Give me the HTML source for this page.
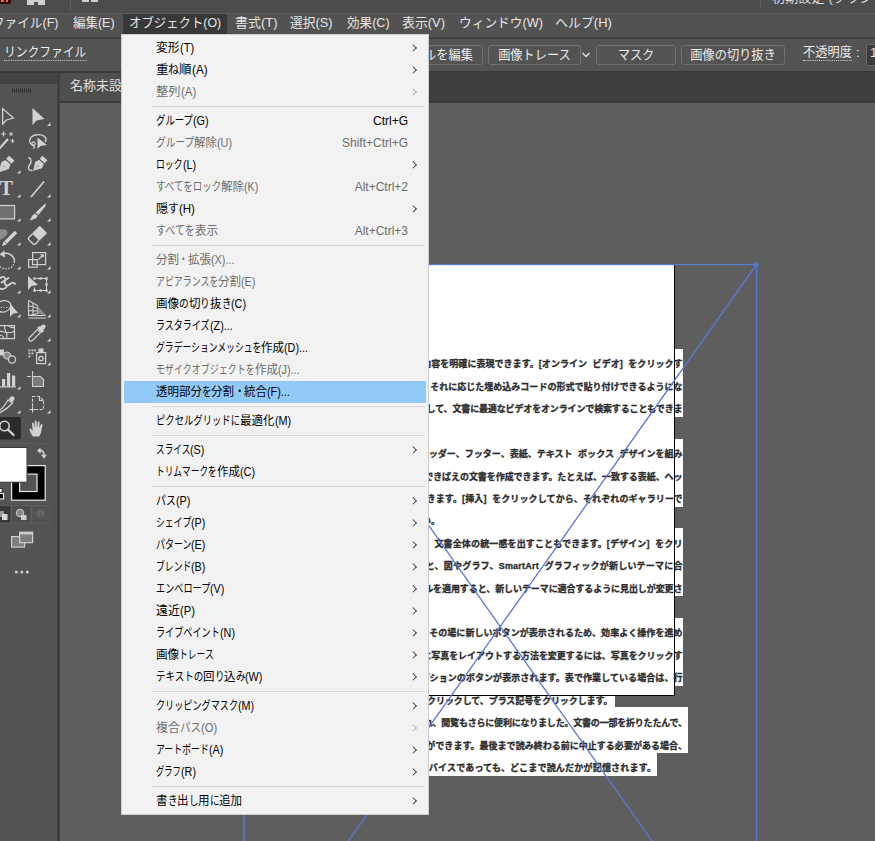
<!DOCTYPE html>
<html lang="ja">
<head>
<meta charset="utf-8">
<title>Illustrator</title>
<style>
html,body{margin:0;padding:0;}
body{width:875px;height:841px;overflow:hidden;position:relative;background:#5e5e5e;font-family:"Liberation Sans","Noto Sans CJK JP",sans-serif;}
.abs{position:absolute;}
#topstrip{left:0;top:0;width:875px;height:13px;background:#4c4c4c;}
#topline{left:0;top:13px;width:875px;height:1px;background:#5a5a5a;z-index:2;}
#menubar{left:0;top:13px;width:875px;height:24px;background:#525252;}
#menubar span{position:absolute;top:0;height:20px;line-height:19px;font-size:13px;color:#e6e6e6;white-space:nowrap;display:inline-block;transform-origin:0 50%;}
#menuline{left:0;top:37px;width:875px;height:2px;background:#3f3f3f;}
#ctrlbar{left:0;top:39px;width:875px;height:32px;background:#535353;}
#ctrlline{left:0;top:71px;width:875px;height:2px;background:#3a3a3a;}
#tabbar{left:60px;top:73px;width:815px;height:28px;background:#3e3e3e;}
#tab{left:60px;top:73px;width:120px;height:28px;background:#4e4e4e;color:#e0e0e0;font-size:13px;line-height:25px;}
#tabline{left:60px;top:101px;width:815px;height:1.5px;background:#3c3c3c;}
#toolpanel{left:0;top:73px;width:57px;height:768px;background:#535353;}
#toolhead{left:0;top:73px;width:57px;height:11px;background:#444;}
#toolgap{left:57px;top:73px;width:3px;height:768px;background:#3f3f3f;}
.btn{position:absolute;top:6px;height:18px;border:1px solid #707070;border-radius:3px;color:#ececec;font-size:13px;line-height:17px;text-align:center;white-space:nowrap;}
.btn span{position:absolute;top:0;display:inline-block;transform:scaleX(0.94);}
.cl{font-size:13px;line-height:18px;color:#ececec;white-space:nowrap;display:inline-block;}

#menu{left:121px;top:34px;width:306px;height:779px;background:#f2f2f2;border:1px solid #cdcdcd;}
#menu .pad{height:2px;}
.mi{position:relative;height:22px;margin:0 2px;color:#000;font-size:12px;line-height:21px;white-space:nowrap;}
.mi.dis{color:#6d6d6d;}
.mi.hl{background:#91c9f7;}
.ml{position:absolute;left:32px;top:1px;}
.r{display:inline-block;position:relative;height:20px;vertical-align:top;}
.r span{position:absolute;left:0;top:0;display:inline-block;transform-origin:0 50%;}
.ms{position:absolute;right:18px;top:1px;}
.ma{position:absolute;right:9.5px;top:7.6px;width:5.4px;height:5.4px;border-right:1.5px solid #3a3a3a;border-top:1.5px solid #3a3a3a;transform:rotate(45deg) scale(0.86);}
.dis .ma{border-color:#aaa;}
.msep{height:7px;position:relative;}
.msep:after{content:"";position:absolute;left:30px;right:3px;top:3px;height:1px;background:#d7d7d7;}

#artboard{left:244px;top:265px;width:430px;height:430px;background:#fff;}
#abr{left:674px;top:265px;width:1.4px;height:431px;background:#000;}
#abb{left:244px;top:694.6px;width:431.4px;height:1.4px;background:#000;}
.wbg{background:#fff;}
.dl{font-size:9px;line-height:16px;height:16px;font-weight:700;color:#2c2c2c;white-space:nowrap;-webkit-text-stroke:0.3px #2c2c2c;}
</style>
</head>
<body>
<div class="abs" id="topstrip"></div>
<div class="abs" style="left:0;top:0;width:11px;height:4px;background:#320a02;border-radius:0 0 2px 0"></div>
<div class="abs" style="left:1px;top:0;width:3px;height:2px;background:#e8701a"></div><div class="abs" style="left:6px;top:0;width:2px;height:2px;background:#e8701a"></div>
<div class="abs" style="left:27px;top:0;width:7px;height:5px;background:#d0d0d0"></div><div class="abs" style="left:38px;top:0;width:7px;height:5px;background:#d0d0d0"></div><div class="abs" style="left:27px;top:0;width:18px;height:1.5px;background:#d0d0d0"></div>
<div class="abs" style="left:70px;top:0;width:1px;height:10px;background:#5f5f5f"></div>
<div class="abs" style="left:82px;top:0;width:7px;height:2px;background:#d0d0d0"></div><div class="abs" style="left:91px;top:0;width:7px;height:2px;background:#d0d0d0"></div>
<div class="abs" style="left:760px;top:0;width:1px;height:8px;background:#5f5f5f"></div>
<div class="abs" style="left:772px;top:-9.5px;font-size:13px;line-height:14px;color:#dedede;white-space:nowrap;letter-spacing:0.2px;">初期設定 (クラシック)</div>
<div class="abs" id="topline"></div>
<div class="abs" id="menubar">
<div class="abs" style="left:123px;top:1px;width:104px;height:20px;background:#383838"></div>
<span style="left:-7.6px;transform:scaleX(0.970)">ファイル(F)</span>
<span style="left:72.5px;transform:scaleX(0.960)">編集(E)</span>
<span style="left:129.0px;transform:scaleX(0.953)">オブジェクト(O)</span>
<span style="left:234.5px;transform:scaleX(0.997)">書式(T)</span>
<span style="left:290.1px;transform:scaleX(0.978)">選択(S)</span>
<span style="left:346.5px;transform:scaleX(0.967)">効果(C)</span>
<span style="left:401.5px;transform:scaleX(0.992)">表示(V)</span>
<span style="left:458.5px;transform:scaleX(0.977)">ウィンドウ(W)</span>
<span style="left:555.2px;transform:scaleX(0.996)">ヘルプ(H)</span>
</div>
<div class="abs" id="menuline"></div>
<div class="abs" id="ctrlbar">
<span class="abs cl" style="left:4px;top:5px;line-height:15.5px;border-bottom:1px dotted #cfcfcf;transform-origin:0 50%;transform:scaleX(0.905)">リンクファイル</span>
<div class="btn" style="left:380px;width:101px;"><span style="transform-origin:100% 50%;right:9px">オリジナルを編集</span></div>
<div class="btn" style="left:488px;width:91px;"><span style="left:0;right:0">画像トレース</span></div>
<svg class="abs" style="left:581px;top:12px" width="10" height="8" viewBox="0 0 10 8"><path d="M1.5,2 L5,5.5 L8.5,2" fill="none" stroke="#e0e0e0" stroke-width="1.5"/></svg>
<div class="btn" style="left:596px;width:78px;"><span style="left:0;right:0">マスク</span></div>
<div class="btn" style="left:681px;width:102px;"><span style="left:0;right:0">画像の切り抜き</span></div>
<span class="abs cl" style="left:802.5px;top:5px;line-height:15.5px;border-bottom:1px dotted #cfcfcf;transform-origin:0 50%;transform:scaleX(0.94)">不透明度</span>
<span class="abs cl" style="left:856px;top:5px;">:</span>
<div class="abs" style="left:866px;top:5px;width:12px;height:20px;background:#3b3b3b;border:1px solid #666;border-radius:2px"></div>
<span class="abs cl" style="left:870px;top:5px;">1</span>
</div>
<div class="abs" id="ctrlline"></div>
<div class="abs" id="tabbar"></div>
<div class="abs" id="tab"><span style="position:absolute;left:10px;white-space:nowrap;">名称未設定</span></div>
<div class="abs" id="tabline"></div>
<div class="abs" id="toolpanel"></div>
<div class="abs" id="toolhead"></div>
<div class="abs" id="toolgap"></div>
<div class="abs" id="artboard"></div>
<div class="abs wbg" style="left:244px;top:349px;width:439px;height:67.5px"></div>
<div class="abs wbg" style="left:244px;top:438.5px;width:439px;height:68px"></div>
<div class="abs wbg" style="left:244px;top:527.5px;width:439px;height:68px"></div>
<div class="abs wbg" style="left:244px;top:618px;width:439px;height:67.5px"></div>
<div class="abs wbg" style="left:244px;top:695px;width:370.5px;height:11.5px"></div>
<div class="abs wbg" style="left:244px;top:706.5px;width:443.5px;height:46px"></div>
<div class="abs wbg" style="left:244px;top:752.5px;width:412.5px;height:23.5px"></div>
<div class="abs" id="abr"></div><div class="abs" id="abb"></div>
<div class="abs dl" style="right:192.46px;top:356.4px;letter-spacing:0.040px;word-spacing:3.00px">ビデオを使うと、伝えたい内容を明確に表現できます。[オンライン ビデオ] をクリックす</div>
<div class="abs dl" style="right:192.48px;top:378.8px;letter-spacing:0.020px">ると、追加したいビデオを、それに応じた埋め込みコードの形式で貼り付けできるようにな</div>
<div class="abs dl" style="right:192.643px;top:401.2px;letter-spacing:-0.143px">ります。キーワードを入力して、文書に最適なビデオをオンラインで検索することもできま</div>
<div class="abs dl" style="right:192.486px;top:446.1px;letter-spacing:0.014px;word-spacing:3.00px">Word に用意されているヘッダー、フッター、表紙、テキスト ボックス デザインを組み</div>
<div class="abs dl" style="right:192.565px;top:468.5px;letter-spacing:-0.065px">合わせると、プロのようなできばえの文書を作成できます。たとえば、一致する表紙、ヘッ</div>
<div class="abs dl" style="right:192.392px;top:490.9px;letter-spacing:0.108px;word-spacing:3.00px">ダー、サイドバーを追加できます。[挿入] をクリックしてから、それぞれのギャラリーで</div>
<div class="abs dl" style="right:435px;top:513.3px">目的の要素を選んでください。</div>
<div class="abs dl" style="right:192.364px;top:535.8px;letter-spacing:0.136px;word-spacing:3.00px">テーマとスタイルを使って、文書全体の統一感を出すこともできます。[デザイン] をクリ</div>
<div class="abs dl" style="right:192.283px;top:558.2px;letter-spacing:0.217px;word-spacing:3.00px">ックし新しいテーマを選ぶと、図やグラフ、SmartArt グラフィックが新しいテーマに合</div>
<div class="abs dl" style="right:192.584px;top:580.6px;letter-spacing:-0.084px">わせて変わります。スタイルを適用すると、新しいテーマに適合するように見出しが変更さ</div>
<div class="abs dl" style="right:192.451px;top:625.4px;letter-spacing:0.049px">Word では、必要に応じてその場に新しいボタンが表示されるため、効率よく操作を進め</div>
<div class="abs dl" style="right:192.526px;top:647.9px;letter-spacing:-0.026px">ることができます。文書内に写真をレイアウトする方法を変更するには、写真をクリックす</div>
<div class="abs dl" style="right:192.423px;top:670.3px;letter-spacing:0.077px">ると、隣にレイアウト オプションのボタンが表示されます。表で作業している場合は、行</div>
<div class="abs dl" style="right:262.588px;top:692.7px;letter-spacing:-0.088px">または列を追加する場所をクリックして、プラス記号をクリックします。</div>
<div class="abs dl" style="right:188.204px;top:715.1px;letter-spacing:-0.204px">新しい閲覧ビューが導入され、閲覧もさらに便利になりました。文書の一部を折りたたんで、</div>
<div class="abs dl" style="right:187.979px;top:737.5px;letter-spacing:0.021px">必要な箇所に集中することができます。最後まで読み終わる前に中止する必要がある場合、</div>
<div class="abs dl" style="right:218.796px;top:760.0px;letter-spacing:0.204px">Word では、たとえ別のデバイスであっても、どこまで読んだかが記憶されます。</div>
<svg class="abs" style="left:0;top:0" width="875" height="841" viewBox="0 0 875 841">
<g fill="none" stroke="#5878d4" stroke-width="1.3">
<rect x="244" y="264.5" width="512.5" height="724"/>
<line x1="244" y1="264.5" x2="756.5" y2="988.5"/>
<line x1="756.5" y1="264.5" x2="244" y2="988.5"/>
</g>
<rect x="754.5" y="262.5" width="4" height="4" fill="#5878d4"/>
</svg>
<!--TOOLS-START-->
<svg class="abs" style="left:0;top:0" width="60" height="841" viewBox="0 0 60 841">
<defs>
<path id="tri" d="M3.5,0 L3.5,3.5 L0,3.5 Z" fill="#d0d0d0"/>
</defs>
<!-- grip -->
<g stroke="#2e2e2e" stroke-width="1">
<path d="M12.5,88.5v4M14.5,88.5v4M16.5,88.5v4M18.5,88.5v4M20.5,88.5v4M22.5,88.5v4M24.5,88.5v4M26.5,88.5v4M28.5,88.5v4M30.5,88.5v4"/>
</g>
<!-- flyout triangles -->
<g>
<use href="#tri" x="47" y="122.5"/>
<use href="#tri" x="17" y="170"/>
<use href="#tri" x="17" y="194"/><use href="#tri" x="47" y="194"/>
<use href="#tri" x="17" y="218"/><use href="#tri" x="47" y="218"/>
<use href="#tri" x="17" y="242"/><use href="#tri" x="47" y="242"/>
<use href="#tri" x="17" y="266"/><use href="#tri" x="47" y="266"/>
<use href="#tri" x="17" y="290"/><use href="#tri" x="47" y="290"/>
<use href="#tri" x="17" y="314"/><use href="#tri" x="47" y="314"/>
<use href="#tri" x="47" y="338"/>
<use href="#tri" x="47" y="362"/>
<use href="#tri" x="17" y="386"/>
<use href="#tri" x="17" y="410"/><use href="#tri" x="47" y="410"/>
</g>
<g fill="none" stroke="#d2d2d2" stroke-width="1.3" stroke-linejoin="miter">
<!-- row1 -->
<path d="M2.6,108.6 L2.6,124 L6.4,120 L13.4,118 Z"/>
<path d="M32.5,108 L32.5,125 L36.6,120.6 L44.5,119 Z" fill="#d2d2d2" stroke="none"/>
<!-- row2: magic wand -->
<path d="M-2,150 L8,139" stroke-width="2.2"/>
<path d="M3.5,131.5v5M1,134h5M11,132v4M9,134h4M12.5,139v4M10.5,141h4" stroke-width="1.1"/>
<!-- lasso -->
<path d="M35,146.5 C30,145 28.5,141 30.5,138 C33,134 42,133.5 45,137 C46.5,139 46,141 45,142" stroke-width="1.4"/>
<circle cx="33.5" cy="143.5" r="1.6" stroke-width="1.2"/>
<path d="M34,145.5 C35,147 34.5,148 33,148.5" stroke-width="1.2"/>
<path d="M37.5,137.5 L37.5,149 L40.5,146 L47,145 Z" fill="#d2d2d2" stroke="none"/>
<!-- row3: pen -->
<g transform="translate(6,164.5) rotate(42)" fill="#d2d2d2" stroke="none">
<path d="M0,10.5 L-5,1.5 L-3.4,-3 L3.4,-3 L5,1.5 Z"/>
<rect x="-3.6" y="-8.5" width="7.2" height="4.2"/>
<path d="M0,9 L0,3.5" stroke="#b4b4b4" stroke-width="0.8"/>
<circle cx="0" cy="2.6" r="0.9" fill="#9a9a9a"/>
</g>
<g transform="translate(39.5,164) rotate(42)" fill="#d2d2d2" stroke="none">
<path d="M0,9.5 L-4.6,1.5 L-3.2,-3 L3.2,-3 L4.6,1.5 Z"/>
<rect x="-3.4" y="-8" width="6.8" height="4"/>
<path d="M0,8 L0,3.5" stroke="#b4b4b4" stroke-width="0.8"/>
<circle cx="0" cy="2.6" r="0.9" fill="#9a9a9a"/>
</g>
<path d="M28.5,157.5 C32,159 31.5,162 29.5,165 C27.5,168 28,171 32.5,170.5" stroke-width="1.4"/>
<!-- row4: T and line -->
<path d="M31,197 L44,181.5" stroke-width="1.7"/>
<!-- row5: rect and brush -->
<rect x="-3" y="205.5" width="17.6" height="13.4" fill="#707070" stroke-width="1.2"/>
<path d="M45.3,203.5 C46,204 46,205 45.5,206 L38.5,215 L35.5,212.5 Z" fill="#d2d2d2" stroke="none"/>
<path d="M35,213.5 L37.7,215.8 C37,218 35,219.5 29.5,220.5 C31.5,218.5 31.5,215 35,213.5 Z" fill="#d2d2d2" stroke="none"/>
<!-- row6: shaper + eraser -->
<path d="M-2,231 C1,228.5 5,228.5 7,231 C8.5,233.5 6,237 2,239 C0,240 -2,239 -3,238 Z" fill="#8d8d8d" stroke="none"/>
<path d="M16,232 L5.5,242.5" stroke-width="3.6"/><path d="M3.6,241.2 L6.8,244.4 L2,246 Z" fill="#d2d2d2" stroke="none"/>
<g transform="translate(37.6,235.2) rotate(-45)"><rect x="-2.2" y="-5.2" width="10.4" height="10.4" rx="0.8" fill="#d2d2d2" stroke="none"/><rect x="-9.4" y="-4.6" width="7.4" height="9.2" rx="1.6" stroke-width="1.3"/></g>
<!-- row7: rotate + scale -->
<path d="M2,254 C8,251.5 14.5,255.5 14.5,261.5" stroke-width="1.5"/>
<path d="M14.5,261.5 C14,267 8,270.5 2,268 C-1,266.5 -2,264 -2.5,262" stroke-width="1.4" stroke-dasharray="1.3 1.6"/>
<path d="M4.5,250.5 L-0.5,254.5 L5,257.5 Z" fill="#d2d2d2" stroke="none"/>
<rect x="32.6" y="252.6" width="13" height="12" stroke-width="1.2"/>
<rect x="28.6" y="259.6" width="8.6" height="7.6" stroke-width="1.2"/>
<path d="M38.5,259.5 L43,255" stroke-width="1.2"/>
<path d="M40,254.3 L43.8,254.3 L43.8,258 Z" fill="#d2d2d2" stroke="none"/>
<!-- row8: warp + free transform -->
<path d="M-1,279 C3,275 6,277 5,281 C4,285 7,287 10,284 C12,282 14,282 15.5,284.5 M-1,288 C2,290 5,289 7,286.5 M1,283 L9,277.5" stroke-width="1.8"/>
<path d="M28,276 L28,290 L31.5,286 L38,285 Z" fill="#d2d2d2" stroke="none"/>
<path d="M36,278.5 L46.5,278.5 L46.5,290.5 L34.5,290.5 L34.5,287.5" stroke-width="1"/>
<g fill="#d2d2d2" stroke="none"><rect x="33.3" y="277.3" width="2.4" height="2.4"/><rect x="45.3" y="277.3" width="2.4" height="2.4"/><rect x="45.3" y="289.3" width="2.4" height="2.4"/><rect x="33.3" y="289.3" width="2.4" height="2.4"/><rect x="39.3" y="277.3" width="2.4" height="2.4"/><rect x="39.3" y="289.3" width="2.4" height="2.4"/><rect x="45.3" y="283.3" width="2.4" height="2.4"/></g>
<!-- row9: shape builder + perspective grid -->
<path d="M-2,303 C2,299.5 8,300 10,303 C12,306 10,310 6,311.5 C3,312.5 0,312 -2,311" stroke-width="1.3"/>
<path d="M-2,307.5 L9,307.5" stroke-width="1.2" stroke-dasharray="1.2 1.5"/>
<path d="M10,303.5 L10,317 L13.2,313.6 L18,313 Z" fill="#d2d2d2" stroke="none"/>
<path d="M28.5,300.5 L28.5,315.5 L46,315.5 M28.5,300.5 L37.5,305.5 L37.5,313.5 L28.5,315.5 M28.5,305.5 L37.5,308.3 M28.5,310.5 L37.5,311 M33,303 L33,314.5 M28.5,318 L46,318" stroke-width="1.1"/>
<path d="M37.5,305.5 L46,315.5 L37.5,313.5 Z" fill="#8a8a8a" stroke="none"/>
<!-- row10: mesh + eyedropper -->
<rect x="-3" y="325.6" width="17.5" height="13" stroke-width="1.2"/>
<path d="M-3,332 C2,329 8,336 14.5,331 M5,325.6 C3,330 9,334 6.5,338.6 M-3,336 C1,334 3,336 4,338.6 M14.5,327.5 C11,328 9.5,327 9,325.6" stroke-width="1.1"/>
<path d="M29.5,340.5 C28.5,339.5 29,338 30,337 L37.5,329.5 L40.5,332.5 L33,340 C32,341 30.5,341.5 29.5,340.5 Z" stroke-width="1.2"/>
<path d="M37,328 L39,326 L40,327 C41,325 43.5,323.5 45,325 C46.5,326.5 45,329 43,330 L44,331 L42,333 Z" fill="#d2d2d2" stroke="none"/>
<!-- row11: blend + symbol sprayer -->
<rect x="-2" y="349.5" width="6" height="6" fill="#d2d2d2" stroke="none"/>
<circle cx="7" cy="355.5" r="3.6" fill="#8d8d8d" stroke="#d2d2d2" stroke-width="1"/>
<circle cx="12" cy="359.5" r="3.6" fill="#535353" stroke="#d2d2d2" stroke-width="1.3"/>
<rect x="36.6" y="352.6" width="9" height="11" stroke-width="1.2"/>
<rect x="38.5" y="348.5" width="5" height="3.5" fill="#d2d2d2" stroke="none"/>
<circle cx="41" cy="358.5" r="2.2" stroke-width="1.3"/>
<g fill="#d2d2d2" stroke="none"><rect x="28.5" y="349.5" width="1.8" height="1.8"/><rect x="31.5" y="349.5" width="1.8" height="1.8"/><rect x="34.3" y="349.5" width="1.8" height="1.8"/><rect x="28.5" y="352.5" width="1.8" height="1.8"/><rect x="31.5" y="352.5" width="1.8" height="1.8"/><rect x="28.5" y="355.5" width="1.8" height="1.8"/></g>
<!-- row12: graph + artboard -->
<g fill="#d2d2d2" stroke="none"><rect x="2" y="379" width="3.2" height="7.5"/><rect x="7" y="373" width="3.2" height="13.5"/><rect x="12" y="375.5" width="3.2" height="11"/><rect x="-2" y="386.3" width="18" height="1.2"/></g>
<path d="M32.5,371 L32.5,377 M27,376.5 L31,376.5" stroke-width="1.1"/>
<path d="M32.5,376.5 L40.5,376.5 L43.5,379.5 L43.5,386.5 L32.5,386.5 Z" fill="#7a7a7a" stroke-width="1.1"/>
<!-- row13: slice + dashed page -->
<path d="M-1,411 C2,409 5,405 8,400 L12.5,403 C9,407 4,410.5 0.5,412.5 Z" stroke-width="1.2"/>
<path d="M8.5,399.5 L11,396.5 C12.5,395.5 15,397 14.5,399 L12.5,402.5 Z" fill="#d2d2d2" stroke="none"/>
<path d="M32.5,396.5 L39.5,396.5 L43.5,400.5 L43.5,409.5 L32.5,409.5 Z" stroke-width="1.1" stroke-dasharray="3 1.5"/>
<path d="M39.5,396.5 L39.5,400.5 L43.5,400.5" stroke-width="1.1"/>
<path d="M32.5,406.5 L32.5,412.5 M29.5,409.5 L35.5,409.5" stroke-width="1.1"/>
<!-- row14: zoom + hand -->
<rect x="-4" y="417" width="25" height="22.5" rx="2.5" fill="#2b2b2b" stroke="none"/>
<circle cx="4.5" cy="426" r="4.7" stroke-width="1.6"/>
<path d="M8,429.5 L13.5,435" stroke-width="2.4" stroke-linecap="round"/>
<path d="M33,436.5 C31,434 30,431.5 29.5,429.5 C29.3,428.3 30.5,428 31.2,429 L32.7,431 L32,423.5 C32,422.3 33.6,422.3 33.8,423.5 L34.6,428 L34.8,421.5 C34.9,420.3 36.5,420.3 36.6,421.5 L36.9,428 L37.9,422.3 C38.1,421.2 39.6,421.4 39.6,422.6 L39.3,428.5 L40.9,424.6 C41.4,423.6 42.7,424 42.5,425.2 L41.2,431.5 C40.8,433.5 40,435.3 39,436.5 Z" fill="#d2d2d2" stroke="none"/>
</g>
<text x="-0.5" y="195" font-family="Liberation Serif, serif" font-weight="bold" font-size="20" fill="#d2d2d2" textLength="13.5" lengthAdjust="spacingAndGlyphs">T</text>
<!-- separator -->
<rect x="0" y="443" width="50" height="1" fill="#5c5c5c"/>
<!-- fill / stroke -->
<rect x="11.6" y="465.6" width="33.6" height="34.6" fill="#000" stroke="#e8e8e8" stroke-width="1.2"/>
<rect x="19.6" y="474.1" width="17.4" height="17.4" fill="#535353" stroke="#e8e8e8" stroke-width="1.2"/>
<rect x="-2" y="447.5" width="29" height="34.7" fill="#fff" stroke="#3a3a3a" stroke-width="1"/>
<!-- swap -->
<path d="M39,450.5 C42,450 44,452 44,455" fill="none" stroke="#d2d2d2" stroke-width="1.6"/>
<path d="M40.5,447.5 L37,450.8 L40.8,453.8 Z" fill="#d2d2d2"/>
<path d="M41,454.8 L47,454.8 L44,458.8 Z" fill="#d2d2d2"/>
<!-- default mini -->
<rect x="-1.5" y="493.5" width="5" height="5.5" fill="#000" stroke="#e0e0e0" stroke-width="1.2"/>
<rect x="-2" y="488.5" width="4" height="4" fill="#fff" stroke="#222" stroke-width="0.8"/>
<!-- colour mode buttons -->
<rect x="-2" y="505.5" width="13" height="17.5" fill="#383838" stroke="#5e5e5e" stroke-width="1"/>
<rect x="11.5" y="505.5" width="19.5" height="17.5" fill="#4e4e4e" stroke="#5e5e5e" stroke-width="1"/>
<rect x="31.5" y="505.5" width="18.5" height="17.5" fill="#535353" stroke="#5e5e5e" stroke-width="1"/>
<rect x="-1" y="511" width="5" height="6" fill="#9a9a9a"/><rect x="2" y="514" width="5.5" height="6" fill="#d8d8d8"/>
<circle cx="20" cy="513" r="3.8" fill="#8a8a8a" stroke="#c8c8c8" stroke-width="1"/><rect x="21" y="515" width="5.5" height="5" fill="#cfcfcf"/>
<circle cx="40.5" cy="513.5" r="4" fill="#636363"/><path d="M40.5,513.5 L40.5,517.5" stroke="#535353" stroke-width="1"/>
<!-- draw mode -->
<rect x="11.6" y="536.6" width="13" height="10.5" fill="#7d7d7d" stroke="#cfcfcf" stroke-width="1.2"/>
<rect x="19.6" y="532.2" width="13" height="10.5" fill="#7d7d7d" stroke="#cfcfcf" stroke-width="1.2"/>
<rect x="19.6" y="532.2" width="13" height="2.2" fill="#cfcfcf"/>
<!-- dots -->
<circle cx="16.3" cy="572" r="1.5" fill="#cfcfcf"/><circle cx="21.8" cy="572" r="1.5" fill="#cfcfcf"/><circle cx="27.3" cy="572" r="1.5" fill="#cfcfcf"/>
</svg>
<!--TOOLS-END-->
<div class="abs" id="menu"><div class="pad"></div>
<div class="mi"><span class="ml"><span class="r" style="width:23.65px"><span style="transform:scaleX(0.985)">変形</span></span><span class="r" style="width:14.15px"><span style="transform:scaleX(0.923)">(T)</span></span></span><span class="ma"></span></div>
<div class="mi"><span class="ml"><span class="r" style="width:12.49px"><span style="transform:scaleX(1.039)">重</span></span><span class="r" style="width:10.93px"><span style="transform:scaleX(0.910)">ね</span></span><span class="r" style="width:12.49px"><span style="transform:scaleX(1.039)">順</span></span><span class="r" style="width:15.59px"><span style="transform:scaleX(0.974)">(A)</span></span></span><span class="ma"></span></div>
<div class="mi dis"><span class="ml"><span class="r" style="width:24.50px"><span style="transform:scaleX(1.020)">整列</span></span><span class="r" style="width:15.30px"><span style="transform:scaleX(0.956)">(A)</span></span></span><span class="ma"></span></div>
<div class="msep"></div>
<div class="mi"><span class="ml"><span class="r" style="width:37.00px"><span style="transform:scaleX(0.783)">グループ</span></span><span class="r" style="width:15.60px"><span style="transform:scaleX(0.900)">(G)</span></span></span><span class="ms">Ctrl+G</span></div>
<div class="mi dis"><span class="ml"><span class="r" style="width:38.34px"><span style="transform:scaleX(0.811)">グループ</span></span><span class="r" style="width:23.05px"><span style="transform:scaleX(0.960)">解除</span></span><span class="r" style="width:15.00px"><span style="transform:scaleX(0.900)">(U)</span></span></span><span class="ms">Shift+Ctrl+G</span></div>
<div class="mi"><span class="ml"><span class="r" style="width:26.60px"><span style="transform:scaleX(0.738)">ロック</span></span><span class="r" style="width:13.20px"><span style="transform:scaleX(0.900)">(L)</span></span></span><span class="ma"></span></div>
<div class="mi dis"><span class="ml"><span class="r" style="width:65.34px"><span style="transform:scaleX(0.793)">すべてをロック</span></span><span class="r" style="width:23.05px"><span style="transform:scaleX(0.960)">解除</span></span><span class="r" style="width:14.40px"><span style="transform:scaleX(0.900)">(K)</span></span></span><span class="ms">Alt+Ctrl+2</span></div>
<div class="mi"><span class="ml"><span class="r" style="width:12.22px"><span style="transform:scaleX(1.017)">隠</span></span><span class="r" style="width:10.69px"><span style="transform:scaleX(0.890)">す</span></span><span class="r" style="width:15.89px"><span style="transform:scaleX(0.953)">(H)</span></span></span><span class="ma"></span></div>
<div class="mi dis"><span class="ml"><span class="r" style="width:38.74px"><span style="transform:scaleX(0.834)">すべてを</span></span><span class="r" style="width:23.05px"><span style="transform:scaleX(0.960)">表示</span></span></span><span class="ms">Alt+Ctrl+3</span></div>
<div class="msep"></div>
<div class="mi dis"><span class="ml"><span class="r" style="width:23.05px"><span style="transform:scaleX(0.960)">分割</span></span><span class="r" style="width:8.69px"><span style="transform:scaleX(0.723)">・</span></span><span class="r" style="width:23.05px"><span style="transform:scaleX(0.960)">拡張</span></span><span class="r" style="width:23.40px"><span style="transform:scaleX(0.900)">(X)...</span></span></span></div>
<div class="mi dis"><span class="ml"><span class="r" style="width:62.34px"><span style="transform:scaleX(0.744)">アピアランスを</span></span><span class="r" style="width:23.05px"><span style="transform:scaleX(0.960)">分割</span></span><span class="r" style="width:14.40px"><span style="transform:scaleX(0.900)">(E)</span></span></span></div>
<div class="mi"><span class="ml"><span class="r" style="width:23.05px"><span style="transform:scaleX(0.960)">画像</span></span><span class="r" style="width:9.72px"><span style="transform:scaleX(0.809)">の</span></span><span class="r" style="width:11.54px"><span style="transform:scaleX(0.960)">切</span></span><span class="r" style="width:9.72px"><span style="transform:scaleX(0.809)">り</span></span><span class="r" style="width:11.54px"><span style="transform:scaleX(0.960)">抜</span></span><span class="r" style="width:9.72px"><span style="transform:scaleX(0.809)">き</span></span><span class="r" style="width:15.00px"><span style="transform:scaleX(0.900)">(C)</span></span></span></div>
<div class="mi"><span class="ml"><span class="r" style="width:53.60px"><span style="transform:scaleX(0.751)">ラスタライズ</span></span><span class="r" style="width:22.80px"><span style="transform:scaleX(0.900)">(Z)...</span></span></span></div>
<div class="mi"><span class="ml"><span class="r" style="width:105.34px"><span style="transform:scaleX(0.735)">グラデーションメッシュを</span></span><span class="r" style="width:23.05px"><span style="transform:scaleX(0.960)">作成</span></span><span class="r" style="width:24.00px"><span style="transform:scaleX(0.900)">(D)...</span></span></span></div>
<div class="mi dis"><span class="ml"><span class="r" style="width:98.65px"><span style="transform:scaleX(0.749)">モザイクオブジェクトを</span></span><span class="r" style="width:23.05px"><span style="transform:scaleX(0.960)">作成</span></span><span class="r" style="width:21.60px"><span style="transform:scaleX(0.900)">(J)...</span></span></span></div>
<div class="mi hl"><span class="ml"><span class="r" style="width:46.09px"><span style="transform:scaleX(0.960)">透明部分</span></span><span class="r" style="width:9.40px"><span style="transform:scaleX(0.782)">を</span></span><span class="r" style="width:23.05px"><span style="transform:scaleX(0.960)">分割</span></span><span class="r" style="width:9.40px"><span style="transform:scaleX(0.782)">・</span></span><span class="r" style="width:23.05px"><span style="transform:scaleX(0.960)">統合</span></span><span class="r" style="width:22.80px"><span style="transform:scaleX(0.900)">(F)...</span></span></span></div>
<div class="msep"></div>
<div class="mi"><span class="ml"><span class="r" style="width:84.03px"><span style="transform:scaleX(0.778)">ピクセルグリッドに</span></span><span class="r" style="width:34.57px"><span style="transform:scaleX(0.960)">最適化</span></span><span class="r" style="width:16.20px"><span style="transform:scaleX(0.900)">(M)</span></span></span></div>
<div class="msep"></div>
<div class="mi"><span class="ml"><span class="r" style="width:34.40px"><span style="transform:scaleX(0.722)">スライス</span></span><span class="r" style="width:14.40px"><span style="transform:scaleX(0.900)">(S)</span></span></span><span class="ma"></span></div>
<div class="mi"><span class="ml"><span class="r" style="width:60.74px"><span style="transform:scaleX(0.723)">トリムマークを</span></span><span class="r" style="width:23.05px"><span style="transform:scaleX(0.960)">作成</span></span><span class="r" style="width:15.00px"><span style="transform:scaleX(0.900)">(C)</span></span></span></div>
<div class="msep"></div>
<div class="mi"><span class="ml"><span class="r" style="width:19.90px"><span style="transform:scaleX(0.829)">パス</span></span><span class="r" style="width:14.40px"><span style="transform:scaleX(0.900)">(P)</span></span></span><span class="ma"></span></div>
<div class="mi"><span class="ml"><span class="r" style="width:35.40px"><span style="transform:scaleX(0.737)">シェイプ</span></span><span class="r" style="width:14.40px"><span style="transform:scaleX(0.900)">(P)</span></span></span><span class="ma"></span></div>
<div class="mi"><span class="ml"><span class="r" style="width:35.40px"><span style="transform:scaleX(0.747)">パターン</span></span><span class="r" style="width:14.40px"><span style="transform:scaleX(0.900)">(E)</span></span></span><span class="ma"></span></div>
<div class="mi"><span class="ml"><span class="r" style="width:35.40px"><span style="transform:scaleX(0.737)">ブレンド</span></span><span class="r" style="width:14.40px"><span style="transform:scaleX(0.900)">(B)</span></span></span><span class="ma"></span></div>
<div class="mi"><span class="ml"><span class="r" style="width:54.40px"><span style="transform:scaleX(0.763)">エンベロープ</span></span><span class="r" style="width:14.40px"><span style="transform:scaleX(0.900)">(V)</span></span></span><span class="ma"></span></div>
<div class="mi"><span class="ml"><span class="r" style="width:23.88px"><span style="transform:scaleX(0.994)">遠近</span></span><span class="r" style="width:14.92px"><span style="transform:scaleX(0.932)">(P)</span></span></span><span class="ma"></span></div>
<div class="mi"><span class="ml"><span class="r" style="width:63.80px"><span style="transform:scaleX(0.759)">ライブペイント</span></span><span class="r" style="width:15.00px"><span style="transform:scaleX(0.900)">(N)</span></span></span><span class="ma"></span></div>
<div class="mi"><span class="ml"><span class="r" style="width:23.05px"><span style="transform:scaleX(0.960)">画像</span></span><span class="r" style="width:34.74px"><span style="transform:scaleX(0.733)">トレース</span></span></span><span class="ma"></span></div>
<div class="mi"><span class="ml"><span class="r" style="width:47.28px"><span style="transform:scaleX(0.793)">テキストの</span></span><span class="r" style="width:11.54px"><span style="transform:scaleX(0.960)">回</span></span><span class="r" style="width:9.53px"><span style="transform:scaleX(0.793)">り</span></span><span class="r" style="width:11.54px"><span style="transform:scaleX(0.960)">込</span></span><span class="r" style="width:9.53px"><span style="transform:scaleX(0.793)">み</span></span><span class="r" style="width:17.40px"><span style="transform:scaleX(0.900)">(W)</span></span></span><span class="ma"></span></div>
<div class="msep"></div>
<div class="mi"><span class="ml"><span class="r" style="width:82.10px"><span style="transform:scaleX(0.760)">クリッピングマスク</span></span><span class="r" style="width:16.20px"><span style="transform:scaleX(0.900)">(M)</span></span></span><span class="ma"></span></div>
<div class="mi dis"><span class="ml"><span class="r" style="width:23.83px"><span style="transform:scaleX(0.992)">複合</span></span><span class="r" style="width:20.85px"><span style="transform:scaleX(0.868)">パス</span></span><span class="r" style="width:16.12px"><span style="transform:scaleX(0.930)">(O)</span></span></span><span class="ma"></span></div>
<div class="mi"><span class="ml"><span class="r" style="width:52.80px"><span style="transform:scaleX(0.741)">アートボード</span></span><span class="r" style="width:14.40px"><span style="transform:scaleX(0.900)">(A)</span></span></span><span class="ma"></span></div>
<div class="mi"><span class="ml"><span class="r" style="width:24.80px"><span style="transform:scaleX(0.688)">グラフ</span></span><span class="r" style="width:15.00px"><span style="transform:scaleX(0.900)">(R)</span></span></span><span class="ma"></span></div>
<div class="msep"></div>
<div class="mi"><span class="ml"><span class="r" style="width:11.54px"><span style="transform:scaleX(0.960)">書</span></span><span class="r" style="width:9.51px"><span style="transform:scaleX(0.792)">き</span></span><span class="r" style="width:11.54px"><span style="transform:scaleX(0.960)">出</span></span><span class="r" style="width:9.51px"><span style="transform:scaleX(0.792)">し</span></span><span class="r" style="width:11.54px"><span style="transform:scaleX(0.960)">用</span></span><span class="r" style="width:9.51px"><span style="transform:scaleX(0.792)">に</span></span><span class="r" style="width:23.05px"><span style="transform:scaleX(0.960)">追加</span></span></span><span class="ma"></span></div>
</div>
</body>
</html>
